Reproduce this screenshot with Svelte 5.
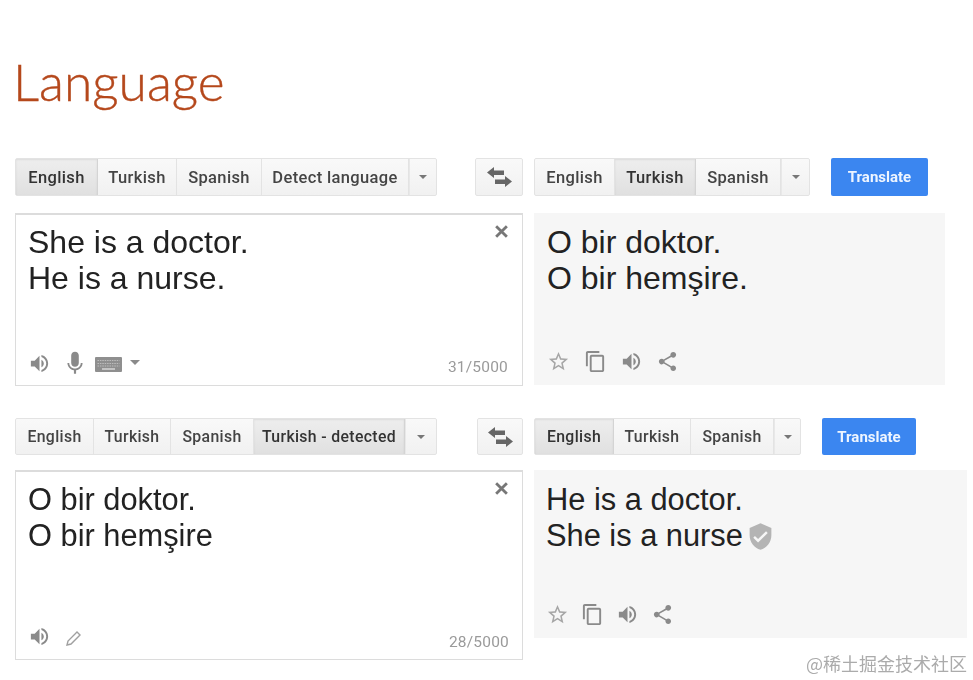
<script>
  const speaker = "M3 9v6h4l5 5V4L7 9H3zm13.5 3c0-1.77-1.02-3.29-2.5-4.03v8.05c1.48-.73 2.5-2.25 2.5-4.02zM14 3.23v2.06c2.89.86 5 3.54 5 6.71s-2.11 5.85-5 6.71v2.06c4.01-.91 7-4.49 7-8.77s-2.99-7.86-7-8.77z";
  const mic = "M12 15.500c2 0 3.500-1.500 3.500-3.500V5c0-2-1.500-3.500-3.500-3.500S8.500 3 8.500 5v7c0 2 1.500 3.500 3.500 3.500zm5.300-3.500c0 3-2.540 5.100-5.300 5.100S6.700 15 6.700 12H5c0 3.410 2.720 6.230 6 6.720V22h2v-3.280c3.280-.48 6-3.300 6-6.720h-1.700z";
  const star = "M22 9.24l-7.19-.62L12 2 9.19 8.63 2 9.24l5.46 4.73L5.82 21 12 17.27 18.18 21l-1.63-7.03L22 9.24zM12 15.4l-3.76 2.27 1-4.28-3.32-2.88 4.38-.38L12 6.1l1.71 4.04 4.38.38-3.32 2.88 1 4.28L12 15.4z";
  const copy = "M16 1H4c-1.1 0-2 .9-2 2v14h2V3h12V1zm3 4H8c-1.1 0-2 .9-2 2v14c0 1.1.9 2 2 2h11c1.1 0 2-.9 2-2V7c0-1.1-.9-2-2-2zm0 16H8V7h11v14z";
  const share = "M18 16.08c-.76 0-1.44.3-1.96.77L8.91 12.7c.05-.23.09-.46.09-.7s-.04-.47-.09-.7l7.05-4.11c.54.5 1.25.81 2.04.81 1.66 0 3-1.34 3-3s-1.34-3-3-3-3 1.34-3 3c0 .24.04.47.09.7L8.04 9.81C7.5 9.31 6.79 9 6 9c-1.66 0-3 1.34-3 3s1.34 3 3 3c.79 0 1.5-.31 2.04-.81l7.12 4.16c-.05.21-.08.43-.08.65 0 1.61 1.31 2.92 2.92 2.92s2.92-1.31 2.92-2.92-1.31-2.92-2.92-2.92z";
  const shield = "M12 1L3 5v6c0 5.55 3.84 10.74 9 12 5.16-1.26 9-6.45 9-12V5l-9-4zm-2 16l-4-4 1.41-1.41L10 14.17l6.59-6.59L18 9l-8 8z";
  const swap = "M0 6.500L7 1v3.500h10v4.500H7V12zM25 15.500L18 10v3.500H8v4.500h10V21z";

  const sections = [
    {
      cls: "first",
      source: [["English", 82, true], ["Turkish", 79], ["Spanish", 85], ["Detect language", 147]],
      swapW: 48,
      input: ["She is a doctor.", "He is a nurse."],
      count: "31/5000",
      target: [["English", 80], ["Turkish", 81, true], ["Spanish", 85]],
      output: ["O bir doktor.", "O bir hemşire."],
      shield: false,
      rich: true,
    },
    {
      cls: "second",
      source: [["English", 78], ["Turkish", 77], ["Spanish", 83], ["Turkish - detected", 151, true]],
      swapW: 46,
      input: ["O bir doktor.", "O bir hemşire"],
      count: "28/5000",
      target: [["English", 79, true], ["Turkish", 77], ["Spanish", 83]],
      output: ["He is a doctor.", "She is a nurse"],
      shield: true,
      rich: false,
    },
  ];
</script>

{#snippet icon(d, cls)}
  <svg class={cls} viewBox="0 0 24 24" aria-hidden="true"><path {d} /></svg>
{/snippet}

{#snippet group(items)}
  <div class="group">
    {#each items as [label, w, active]}
      <button class="seg" class:active style="width:{w}px">{label}</button>
    {/each}
    <button class="seg more" aria-label="More languages"><span class="caret"></span></button>
  </div>
{/snippet}

<main class="page">
  <h1>Language</h1>

  {#each sections as s}
    <section class={s.cls}>
      <div class="left">
        <div class="bar">
          {@render group(s.source)}
          <button class="swap" style="width:{s.swapW}px" aria-label="Swap languages">
            <svg viewBox="0 0 25 22" aria-hidden="true"><path d={swap} /></svg>
          </button>
        </div>
        <div class="panel input">
          <p class="text">{s.input[0]}<br />{s.input[1]}</p>
          <svg class="close" viewBox="0 0 14 14" aria-hidden="true"><path d="M2 2l10 10M12 2L2 12" /></svg>
          <div class="foot">
            <div class="tools">
              {@render icon(speaker, "i speak")}
              {#if s.rich}
                {@render icon(mic, "i mic")}
                <svg class="kbd" viewBox="0 0 27 15" aria-hidden="true">
                  <rect width="27" height="15" rx="1" fill="#8f8f8f" />
                  <path d="M2.500 3.500h22M2.500 6.500h22M2.500 9h22" stroke="#bdbdbd" stroke-width="1.200" stroke-dasharray="1.500 .9" />
                  <path d="M7 12h13" stroke="#d6d6d6" stroke-width="1.500" />
                </svg>
                <span class="caret small"></span>
              {:else}
                <svg class="pencil" viewBox="0 0 18 18" aria-hidden="true">
                  <path d="M2 16l1-4 9-9 3 3-9 9z" fill="none" stroke="#a0a0a0" stroke-width="1.400" />
                </svg>
              {/if}
            </div>
            <span class="count">{s.count}</span>
          </div>
        </div>
      </div>

      <div class="right">
        <div class="bar">
          {@render group(s.target)}
          <button class="translate">Translate</button>
        </div>
        <div class="panel output">
          <p class="text">
            {s.output[0]}<br />{s.output[1]}{#if s.shield}<svg class="shield" viewBox="0 0 24 24" aria-hidden="true"><path d={shield} /></svg>{/if}
          </p>
          <div class="foot">
            <div class="tools out">
              {@render icon(star, "i star")}
              {@render icon(copy, "i copy")}
              {@render icon(speaker, "i speak")}
              {@render icon(share, "i share")}
            </div>
          </div>
        </div>
        {#if s.shield}<div class="mark">@稀土掘金技术社区</div>{/if}
      </div>
    </section>
  {/each}
</main>

<style>
  :global(body) {
    margin: 0;
    background: #fff;
  }
  .page {
    box-sizing: border-box;
    width: 973px;
    height: 680px;
    padding-left: 15px;
    overflow: hidden;
    font-family: "Liberation Sans", Arial, sans-serif;
  }
  h1 {
    margin: 0 0 0 -2px;
    height: 158px;
    box-sizing: border-box;
    padding-top: 49px;
    font: 300 51.500px/64px Lato, sans-serif;
    -webkit-text-stroke: 0.4px #b5481c;
    color: #b5481c;
  }
  section {
    display: flex;
    gap: 11px;
    filter: blur(0.35px);
  }
  .second {
    margin-top: 32px;
  }
  .left {
    width: 508px;
  }
  .right {
    flex: 1;
    min-width: 0;
  }
  .bar {
    display: flex;
    justify-content: space-between;
    height: 38px;
    margin-bottom: 17px;
  }
  .right .bar {
    justify-content: flex-start;
    gap: 21px;
  }
  .second .bar {
    height: 37px;
    margin-bottom: 15px;
  }
  .group {
    display: flex;
    box-sizing: border-box;
    border: 1px solid #e3e3e3;
    border-radius: 2px;
    background: linear-gradient(#f9f9f9, #f1f1f1);
  }
  button {
    font: inherit;
    margin: 0;
    padding: 0;
    border: 0;
    background: none;
  }
  .seg {
    box-sizing: border-box;
    border-right: 1px solid #e3e3e3;
    font: 500 16.500px Roboto, sans-serif;
    letter-spacing: 0.35px;
    color: #444;
    text-align: center;
    flex: none;
  }
  .second .seg {
    font-size: 15.800px;
  }
  .seg.active {
    background: linear-gradient(#eeeeee, #e0e0e0);
    box-shadow: inset 0 1px 2px rgba(0, 0, 0, 0.08);
    border-right-color: #d4d4d4;
    color: #333;
  }
  .more {
    flex: none;
    width: 27px;
    border-right: 0;
    border-left: 1px solid #e8e8e8;
    display: flex;
    align-items: center;
    justify-content: center;
  }
  .first .right .more {
    width: 28px;
  }
  .second .left .more {
    width: 31px;
  }
  .second .right .more {
    width: 26px;
  }
  .caret {
    display: block;
    width: 0;
    height: 0;
    border: 4.500px solid transparent;
    border-top: 4.500px solid #777;
    border-bottom: 0;
  }
  .caret.small {
    margin-left: -6px;
    margin-top: -2px;
    border-width: 5px 5px 0;
    border-top-color: #8a8a8a;
  }
  .swap {
    box-sizing: border-box;
    border: 1px solid #e3e3e3;
    border-radius: 2px;
    background: linear-gradient(#f9f9f9, #f1f1f1);
    display: flex;
    align-items: center;
    justify-content: center;
  }
  .swap svg {
    width: 25px;
    height: 22px;
    fill: #666;
  }
  .translate {
    box-sizing: border-box;
    width: 97px;
    border-radius: 2px;
    background: #3b86f0;
    color: #eef5ff;
    font: 700 15px Roboto, sans-serif;
  }
  .second .translate {
    width: 94px;
  }
  .panel {
    position: relative;
    box-sizing: border-box;
    display: flex;
    flex-direction: column;
  }
  .input {
    height: 173px;
    border: 1px solid #dcdcdc;
    border-top: 2px solid #dcdcdc;
    padding: 9px 14px 0 12px;
  }
  .second .input {
    height: 190px;
    padding-top: 10px;
  }
  .output {
    width: 411px;
    height: 172px;
    background: #f6f6f6;
    padding: 11px 0 0 13px;
  }
  .second .output {
    width: 433px;
    height: 168px;
    padding-top: 12px;
    padding-left: 12px;
  }
  .text {
    margin: 0;
    font-size: 32px;
    line-height: 36px;
    color: #222;
  }
  .second .text {
    font-size: 30.800px;
  }
  .close {
    position: absolute;
    top: 9px;
    right: 13px;
    width: 15px;
    height: 15px;
    fill: none;
    stroke: #777;
    stroke-width: 2.600;
  }
  .foot {
    margin-top: auto;
    display: flex;
    align-items: center;
    justify-content: space-between;
    height: 24px;
    margin-bottom: 10px;
  }
  .second .input .foot {
    margin-bottom: 9px;
  }
  .second .input .tools {
    margin-top: -4px;
  }
  .output .foot {
    margin-bottom: 12px;
  }
  .tools {
    display: flex;
    align-items: center;
    gap: 14px;
  }
  .tools.out {
    gap: 13px;
  }
  .first .tools.out .copy {
    margin-left: 1px;
  }
  .second .tools.out {
    gap: 12px;
  }
  .i {
    display: block;
    width: 23px;
    height: 23px;
    fill: #8a8a8a;
    flex: none;
  }
  .mic {
    width: 26px;
    height: 26px;
    fill: #8a8a8a;
    margin: 0 -3px;
  }
  .star {
    fill: #a6a6a6;
  }
  .kbd {
    width: 27px;
    height: 15px;
    margin-top: 3px;
    flex: none;
    margin-left: -4px;
  }
  .pencil {
    width: 18px;
    height: 18px;
    margin-top: 4px;
  }
  .count {
    font: 400 15.500px Roboto, sans-serif;
    color: #9a9a9a;
    margin-top: 8px;
    letter-spacing: 0.2px;
  }
  .second .count {
    margin-right: -1px;
  }
  .shield {
    width: 29px;
    height: 29px;
    fill: #b4b4b4;
    vertical-align: -5px;
    margin-left: 3px;
  }
  .mark {
    width: 433px;
    margin-top: 14px;
    text-align: right;
    font: 400 18px "Noto Sans CJK SC", sans-serif;
    line-height: 22px;
    color: #ababab;
  }
</style>
